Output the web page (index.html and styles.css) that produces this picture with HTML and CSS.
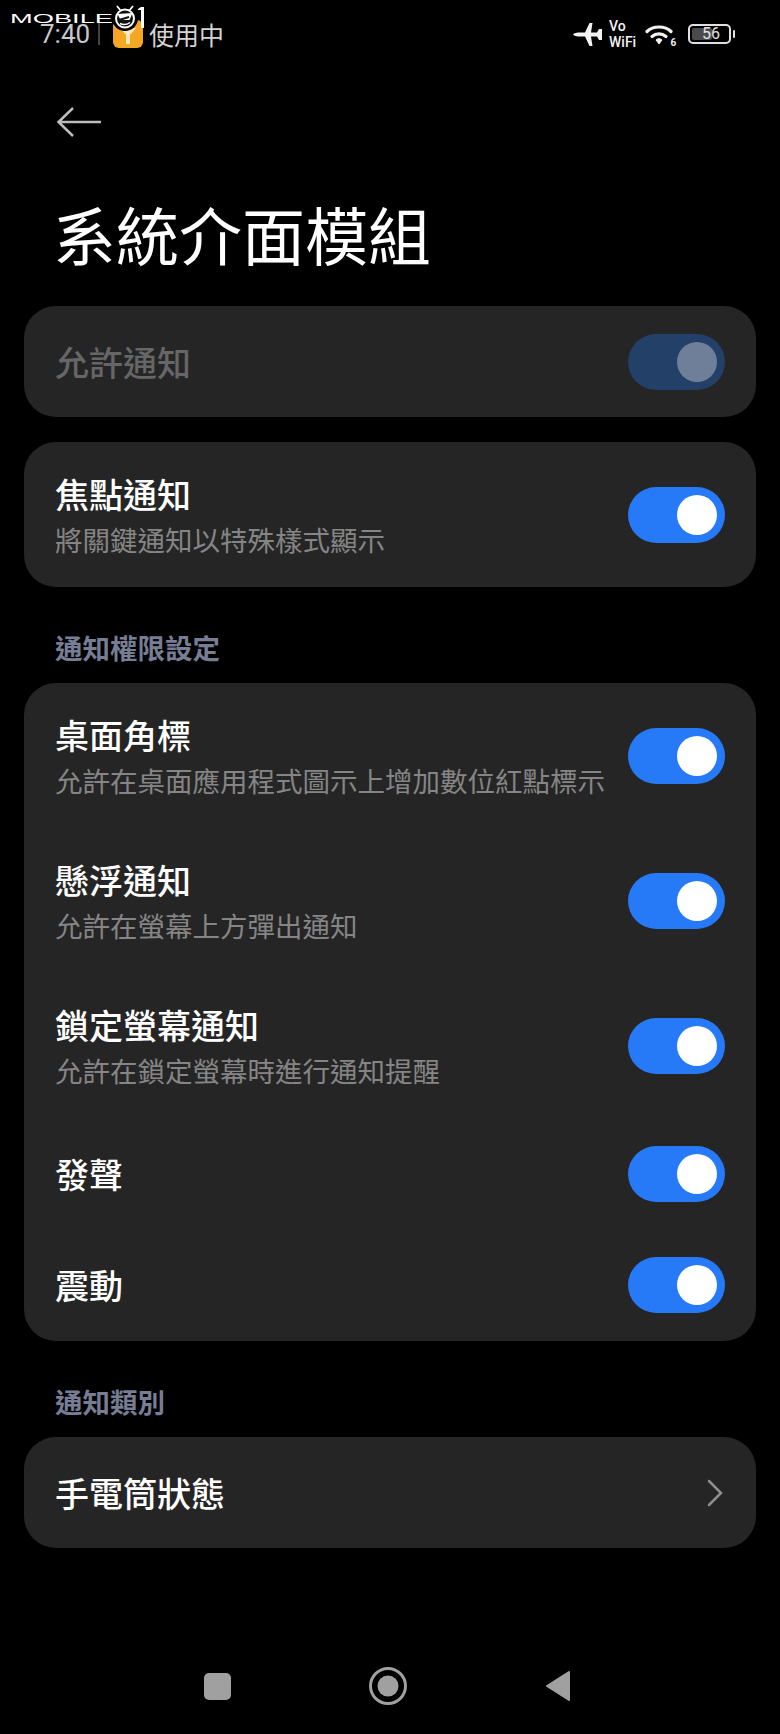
FILE: index.html
```html
<!DOCTYPE html>
<html lang="zh-Hant">
<head>
<meta charset="utf-8">
<title>系統介面模組</title>
<link rel="stylesheet" href="styles.css">
</head>
<body>
<div class="page">
  <div class="watermark">
    <svg class="wm-svg" width="150" height="36" viewBox="0 0 150 36">
      <text x="10" y="23" class="wm-text" textLength="103" lengthAdjust="spacingAndGlyphs">MOBILE</text>
      <circle cx="125" cy="18" r="13" fill="#000"/>
      <path d="M117 6l4 5M133 6l-4 5" stroke="#fff" stroke-width="1.800"/>
      <circle cx="125" cy="18.500" r="9" fill="#111" stroke="#fff" stroke-width="2"/>
      <path d="M117.500 14l15-1-3 7h-9z" fill="#fff"/>
      <path d="M119 20l10-3" stroke="#111" stroke-width="2"/>
      <path d="M120 23.500q5 2.500 10-1" stroke="#fff" stroke-width="1.500" fill="none"/>
      <path d="M138 9l3-2h3v21h-3V10h-3z" fill="#fff"/>
    </svg>
  </div>
  <header class="status">
    <div class="status-left">
      <span class="time">7:40</span>
      <span class="divider"></span>
      <svg class="lock" width="30" height="28" viewBox="0 0 30 28">
        <rect width="30" height="28" rx="6" fill="#f5a623"/>
        <path d="M7 8h16l-5 6h-1v10h-4V14h-1z" fill="#fbe7b8"/>
      </svg>
      <span class="using">使用中</span>
    </div>
    <div class="status-right">
      <svg class="plane" width="29" height="23" viewBox="0 0 29 23"><path d="M0 11.500C1 10 4 9.500 7 9.500h5L16.500 0h3L18 9.500h6L26 6h3v11h-3l-2-3.500h-6L19.500 23h-3L12 13.500H7c-3 0-6-.5-7-2z" fill="#f2f2f2"/></svg>
      <div class="vowifi"><span>Vo</span><span>WiFi</span></div>
      <svg class="wifi" width="32" height="23" viewBox="0 0 32 23"><g fill="none" stroke="#f2f2f2" stroke-width="3.200" stroke-linecap="round"><path d="M2 8.500C8 2.500 20 2.500 26 8.500"/><path d="M7 13.500C11 10 17 10 21 13.500"/></g><path d="M11 17c2-1.800 4-1.800 6 0l-3 4z" fill="#f2f2f2" stroke="#f2f2f2" stroke-linejoin="round"/><text x="25.500" y="22.500" class="wifi6">6</text></svg>
      <div class="battery"><div class="battery-body"><span class="battery-fill"></span><span class="battery-num">56</span></div><span class="battery-cap"></span></div>
    </div>
  </header>

  <div class="back-row">
    <svg width="46" height="34" viewBox="0 0 46 34"><path d="M45 17H2.500M17 3L2.500 17l14.500 14" fill="none" stroke="#bdbdbd" stroke-width="2.500"/></svg>
  </div>
  <h1 class="title">系統介面模組</h1>

  <main class="content">
    <section class="card">
      <div class="row row-short"><div class="text"><div class="row-title disabled">允許通知</div></div><span class="toggle off-state"><span class="knob"></span></span></div>
    </section>
    <section class="card">
      <div class="row row-tall"><div class="text"><div class="row-title">焦點通知</div><div class="row-sub">將關鍵通知以特殊樣式顯示</div></div><span class="toggle"><span class="knob"></span></span></div>
    </section>

    <h2 class="section-label">通知權限設定</h2>
    <section class="card">
      <div class="row row-tall"><div class="text"><div class="row-title">桌面角標</div><div class="row-sub">允許在桌面應用程式圖示上增加數位紅點標示</div></div><span class="toggle"><span class="knob"></span></span></div>
      <div class="row row-tall"><div class="text"><div class="row-title">懸浮通知</div><div class="row-sub">允許在螢幕上方彈出通知</div></div><span class="toggle"><span class="knob"></span></span></div>
      <div class="row row-tall"><div class="text"><div class="row-title">鎖定螢幕通知</div><div class="row-sub">允許在鎖定螢幕時進行通知提醒</div></div><span class="toggle"><span class="knob"></span></span></div>
      <div class="row row-short"><div class="text"><div class="row-title">發聲</div></div><span class="toggle"><span class="knob"></span></span></div>
      <div class="row row-mid"><div class="text"><div class="row-title">震動</div></div><span class="toggle"><span class="knob"></span></span></div>
    </section>

    <h2 class="section-label">通知類別</h2>
    <section class="card">
      <div class="row row-short"><div class="text"><div class="row-title">手電筒狀態</div></div>
        <svg class="chevron" width="18" height="30" viewBox="0 0 18 30"><path d="M4 3l12 12L4 27" fill="none" stroke="#8f8f8f" stroke-width="2.500" stroke-linecap="round"/></svg>
      </div>
    </section>
  </main>

  <nav class="navbar">
    <svg width="27" height="27" viewBox="0 0 27 27"><rect width="27" height="27" rx="5" fill="#a0a0a0"/></svg>
    <svg width="38" height="38" viewBox="0 0 38 38"><circle cx="19" cy="19" r="17.500" fill="none" stroke="#a0a0a0" stroke-width="3"/><circle cx="19" cy="19" r="10.500" fill="#a0a0a0"/></svg>
    <svg width="26" height="32" viewBox="0 0 26 32"><path d="M24 2L2 16l22 14z" fill="#a0a0a0" stroke="#a0a0a0" stroke-width="2" stroke-linejoin="round"/></svg>
  </nav>
</div>
</body>
</html>
```
FILE: styles.css
```css
* { box-sizing: border-box; }
html, body { margin: 0; padding: 0; background: #000; }
body { font-family: "Noto Sans CJK TC", "Noto Sans", sans-serif; color: #fff; }
.page { position: relative; width: 780px; height: 1734px; overflow: hidden; background: #000; }

.watermark { position: absolute; left: 0; top: 0; z-index: 2; }
.wm-svg { display: block; }
.wm-text { font-family: "Liberation Sans", sans-serif; font-size: 12.500px; fill: #fff; }

.status { height: 68px; padding: 16px 45px 0 40px; display: flex; justify-content: space-between; align-items: flex-start; }
.status-left { display: flex; align-items: center; height: 36px; }
.time { font-family: "Roboto", sans-serif; font-size: 26px; color: #c8c8c8; width: 50px; }
.divider { width: 2px; height: 22px; background: #444; margin-left: 8px; }
.lock { margin-left: 13px; }
.using { font-size: 25px; color: #d4d4d4; margin-left: 6px; line-height: 36px; }
.status-right { display: flex; align-items: center; height: 36px; }
.plane { margin-right: 7px; }
.vowifi { display: flex; flex-direction: column; font-family: "Roboto", sans-serif; font-size: 14px; line-height: 16px; font-weight: 500; width: 29px; margin-right: 7px; color: #f2f2f2; }
.wifi6 { font-family: "Roboto", sans-serif; font-size: 10px; font-weight: 700; fill: #f2f2f2; }
.wifi { margin-right: 11px; }
.battery { display: flex; align-items: center; gap: 2px; }
.battery-body { position: relative; width: 43px; height: 20px; border: 2px solid #e0e0e0; border-radius: 5px; display: flex; align-items: center; justify-content: center; padding-left: 3px; }
.battery-fill { position: absolute; left: 2px; top: 2px; bottom: 2px; width: 20px; background: #4a4a4a; border-radius: 2px; }
.battery-num { position: relative; font-family: "Roboto", sans-serif; font-size: 16px; line-height: 16px; color: #e4e4e4; }
.battery-cap { width: 2px; height: 8px; background: #e0e0e0; border-radius: 1px; }

.back-row { height: 100px; padding: 37px 0 0 56px; }
.back-row svg { display: block; }
.title { margin: 0; padding-left: 53px; height: 138px; font-size: 63px; line-height: 130px; font-weight: 400; }

.content { padding: 0 24px; display: flex; flex-direction: column; }
.card { background: #252525; border-radius: 32px; margin-bottom: 25px; }
.row { display: flex; align-items: center; justify-content: space-between; padding: 0 31px; }
.row-short { height: 111px; }
.row-mid { height: 112px; }
.row-tall { height: 145px; }
.row-tall .text { padding-top: 3px; }
.text { display: flex; flex-direction: column; }
.row-title { font-size: 34px; line-height: 44px; font-weight: 500; }
.row-title.disabled { color: #666; }
.row-sub { font-size: 27.500px; line-height: 41px; margin-top: 3px; color: #858585; }

.toggle { flex: none; position: relative; width: 97px; height: 56px; border-radius: 28px; background: #277af7; }
.knob { position: absolute; right: 8px; top: 8px; width: 40px; height: 40px; border-radius: 50%; background: #fff; }
.off-state { background: #234068; }
.off-state .knob { background: #6f7f99; }
.chevron { margin-right: 2px; }

.section-label { margin: 0; padding: 0 31px; height: 71px; font-size: 27.500px; line-height: 70px; font-weight: 700; color: #777d94; }

.navbar { position: absolute; left: 0; right: 0; top: 1667px; height: 38px; display: flex; align-items: center; padding-left: 204px; gap: 138px; }
```
